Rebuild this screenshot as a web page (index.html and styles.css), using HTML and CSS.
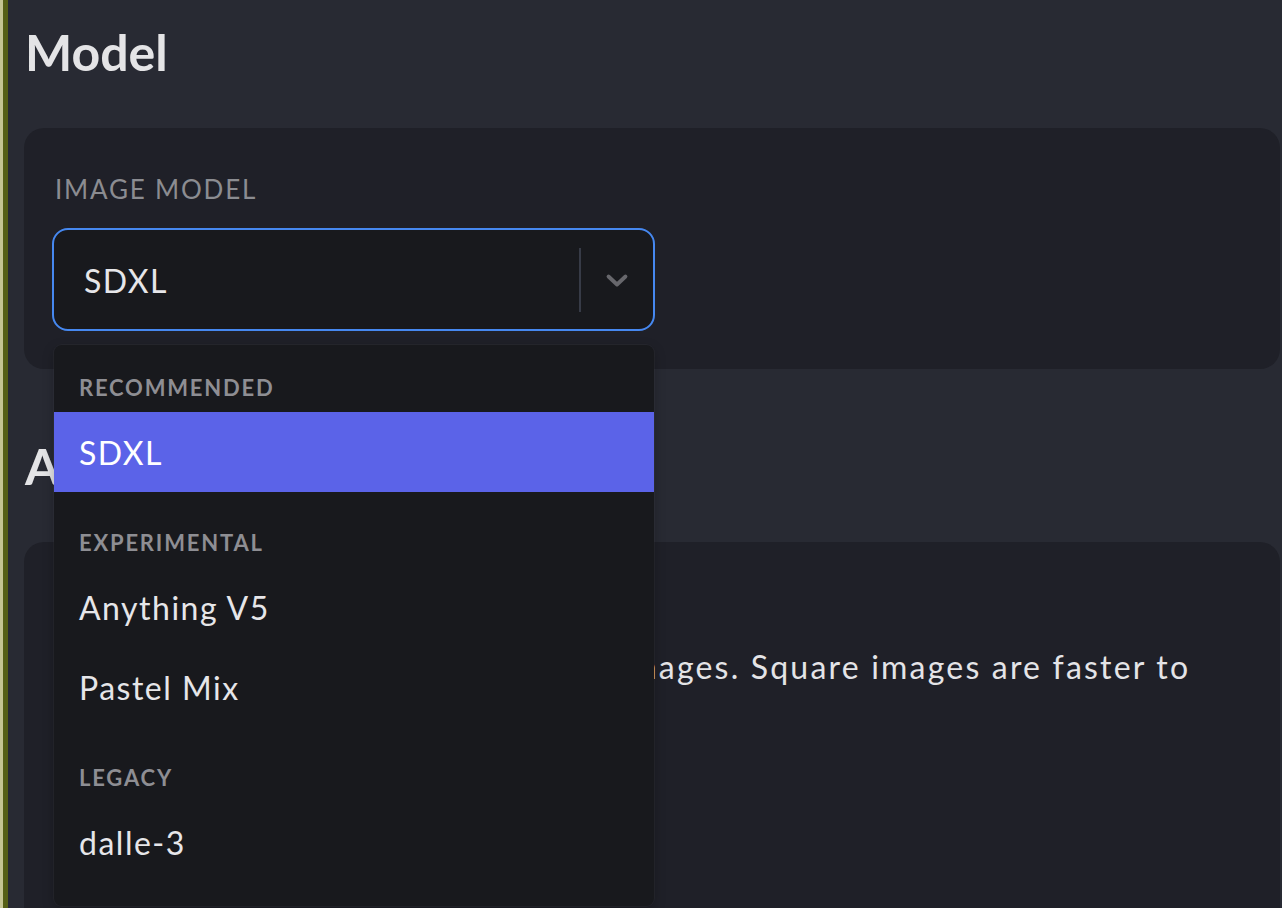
FILE: index.html
```html
<!DOCTYPE html>
<html lang="en">
<head>
<meta charset="utf-8">
<title>Model settings</title>
<link rel="stylesheet" href="styles.css">
</head>
<body>
<div class="app">
  <div class="rail"></div>
  <main class="content">
    <h1 class="section-title">Model</h1>
    <section class="card">
      <div class="field-label">IMAGE MODEL</div>
      <div class="select-wrap">
        <div class="select">
          <span class="select-value">SDXL</span>
          <span class="select-sep"></span>
          <span class="select-chevron">
            <svg width="24" height="16" viewBox="0 0 24 16" aria-hidden="true"><path d="M3.5 3.5 L12 11.5 L20.5 3.5" fill="none" stroke="#67676c" stroke-width="3.8" stroke-linecap="round" stroke-linejoin="round"/></svg>
          </span>
        </div>
        <div class="menu">
          <div class="group">
            <div class="group-heading">Recommended</div>
            <div class="option selected">SDXL</div>
          </div>
          <div class="group">
            <div class="group-heading">Experimental</div>
            <div class="option">Anything V5</div>
            <div class="option">Pastel Mix</div>
          </div>
          <div class="group">
            <div class="group-heading">Legacy</div>
            <div class="option">dalle-3</div>
          </div>
        </div>
      </div>
    </section>
    <h1 class="section-title second">Aspect Ratio</h1>
    <section class="card card-tall">
      <div class="field-label">ASPECT RATIO</div>
      <p class="desc">Choose the aspect ratio of all your images. Square images are faster to generate.</p>
    </section>
  </main>
</div>
</body>
</html>
```
FILE: styles.css
```css
* { box-sizing: border-box; }
html, body { margin: 0; padding: 0; }
body {
  background: #282a33;
  color: #e6e6e9;
  font-family: "Lato", "Noto Sans", sans-serif;
  overflow: hidden;
}
.app {
  display: flex;
  min-height: 908px;
}
.rail {
  flex: 0 0 8px;
  background: #566016;
  border-left: 3px solid #c6c693;
}
.content {
  flex: 1;
  padding: 23px 2px 0 16px;
}
.section-title {
  margin: 0 0 47px 0;
  font-size: 50px;
  line-height: 58px;
  font-weight: 700;
  color: #e4e4e6;
  padding-left: 1px;
}
.section-title.second { margin-top: 68px; }
.card {
  background: #1f2028;
  border-radius: 20px;
  padding: 46px 28px 38px;
}
.card-tall { min-height: 500px; }
.field-label {
  font-size: 26px;
  line-height: 31px;
  color: #8b8c91;
  letter-spacing: 1.8px;
  padding-left: 3px;
  margin-bottom: 23px;
}
.select-wrap {
  position: relative;
  width: 603px;
}
.select {
  display: flex;
  align-items: stretch;
  height: 103px;
  background: #18191d;
  border: 2px solid #4688f0;
  border-radius: 16px;
}
.select-value {
  flex: 1;
  display: flex;
  align-items: center;
  padding: 1px 0 0 30px;
  font-size: 32px;
  letter-spacing: 1.5px;
  color: #e6e6e9;
}
.select-sep {
  width: 2px;
  background: #373b47;
  margin: 18px 0 17px;
}
.select-chevron {
  width: 72px;
  display: flex;
  align-items: center;
  justify-content: center;
  padding-top: 2px;
}
.menu {
  position: absolute;
  z-index: 10;
  top: calc(100% + 14px);
  left: 2px;
  width: 600px;
  background: #18191d;
  border-radius: 8px;
  padding: 8px 0;
  box-shadow: 0 0 0 1px rgba(255,255,255,0.03), 0 4px 12px rgba(0,0,0,0.25);
}
.group { padding: 16px 0; }
.group-heading {
  text-transform: uppercase;
  font-size: 22px;
  line-height: 36px;
  font-weight: 700;
  letter-spacing: 1.8px;
  color: #8e8e93;
  padding: 1px 25px 0;
  margin-bottom: 6px;
}
.option {
  height: 80px;
  display: flex;
  align-items: center;
  padding: 1px 25px 0;
  font-size: 32px;
  letter-spacing: 1.5px;
  color: #e6e6e9;
}
.option.selected {
  background: #5b63e8;
  color: #ffffff;
}
.desc {
  margin: 29px 0 0;
  font-size: 32px;
  line-height: 38px;
  letter-spacing: 2.2px;
  color: #e4e4e7;
  padding-left: 2px;
}
```
